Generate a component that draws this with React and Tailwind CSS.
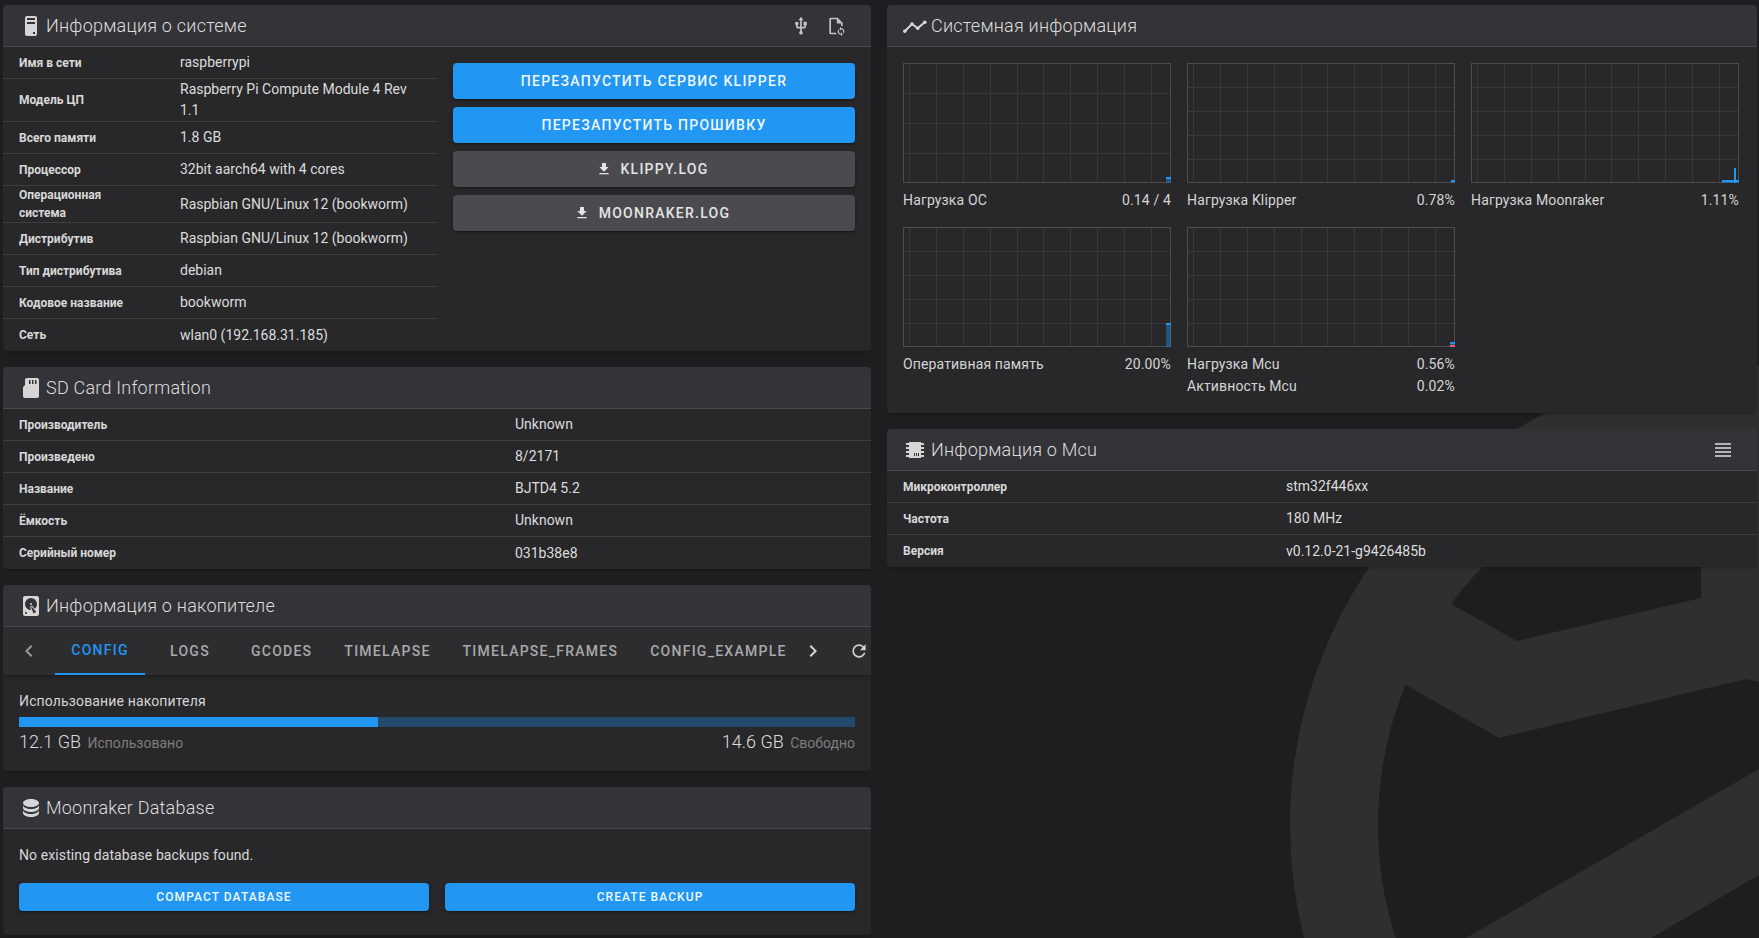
const icons = {
  tower: 'M8,2H16A2,2 0 0,1 18,4V20A2,2 0 0,1 16,22H8A2,2 0 0,1 6,20V4A2,2 0 0,1 8,2M8,4V6H16V4H8M16,8H8V10H16V8M16,18H14V20H16V18Z',
  usb: 'M15,7V11H16V13H13V5H15L12,1L9,5H11V13H8V10.93C8.7,10.56 9.2,9.85 9.2,9C9.2,7.78 8.21,6.8 7,6.8C5.79,6.8 4.8,7.78 4.8,9C4.8,9.85 5.3,10.56 6,10.93V13A2,2 0 0,0 8,15H11V18.05C10.29,18.41 9.8,19.15 9.8,20A2.2,2.2 0 0,0 12,22.2A2.2,2.2 0 0,0 14.2,20C14.2,19.15 13.71,18.41 13,18.05V15H16A2,2 0 0,0 18,13V11H19V7H15Z',
  fileRefresh: 'M6 2C4.89 2 4 2.89 4 4V20C4 21.11 4.89 22 6 22H12.81C12.46 21.39 12.22 20.72 12.09 20H6V4H13V9H18V12.08C18.33 12.03 18.67 12 19 12C19.34 12 19.67 12.03 20 12.08V8L14 2M18 14.5V13L15.75 15.25L18 17.5V16C19.38 16 20.5 17.12 20.5 18.5C20.5 18.9 20.41 19.28 20.24 19.62L21.33 20.71C21.75 20.08 22 19.32 22 18.5C22 16.29 20.21 14.5 18 14.5M18 21C16.62 21 15.5 19.88 15.5 18.5C15.5 18.1 15.59 17.72 15.76 17.38L14.67 16.29C14.25 16.92 14 17.68 14 18.5C14 20.71 15.79 22.5 18 22.5V24L20.25 21.75L18 19.5V21Z',
  sd: 'M8 2H18A2 2 0 0 1 20 4V20A2 2 0 0 1 18 22H6A2 2 0 0 1 4 20V11L6 9V4A2 2 0 0 1 8 2Z M10 4V8H11.5V4Z M13 4V8H14.5V4Z M16 4V8H17.5V4Z',
  disk: 'M6,2H18A2,2 0 0,1 20,4V20A2,2 0 0,1 18,22H6A2,2 0 0,1 4,20V4A2,2 0 0,1 6,2M12,4A6,6 0 0,0 6,10C6,13.31 8.69,16 12.1,16L11.22,13.77C10.95,13.29 11.11,12.68 11.59,12.4L12.45,11.9C12.93,11.63 13.54,11.79 13.82,12.27L15.74,14.69C17.12,13.59 18,11.9 18,10A6,6 0 0,0 12,4M12,9A1,1 0 0,1 13,10A1,1 0 0,1 12,11A1,1 0 0,1 11,10A1,1 0 0,1 12,9M7,18A1,1 0 0,0 6,19A1,1 0 0,0 7,20A1,1 0 0,0 8,19A1,1 0 0,0 7,18M12.09,13.27L14.58,19.58L17.17,18.08L12.95,12.77L12.09,13.27Z',
  database: 'M12,3C7.58,3 4,4.79 4,7C4,9.21 7.58,11 12,11C16.42,11 20,9.21 20,7C20,4.79 16.42,3 12,3M4,9V12C4,14.21 7.58,16 12,16C16.42,16 20,14.21 20,12V9C20,11.21 16.42,13 12,13C7.58,13 4,11.21 4,9M4,14V17C4,19.21 7.58,21 12,21C16.42,21 20,19.21 20,17V14C20,16.21 16.42,18 12,18C7.58,18 4,16.21 4,14Z',
  chip: 'M6,4H18V5H21V7H18V9H21V11H18V13H21V15H18V17H21V19H18V20H6V19H3V17H6V15H3V13H6V11H3V9H6V7H3V5H6V4M11,15V18H12V15H11M13,15V18H14V15H13M15,15V18H16V15H15Z',
  headline: 'M4,5H20V7H4V5M4,9H20V11H4V9M4,13H20V15H4V13M4,17H20V19H4V17Z',
  download: 'M5,20H19V18H5M19,9H15V3H9V9H5L12,16L19,9Z',
  left: 'M15.41,16.58L10.83,12L15.41,7.41L14,6L8,12L14,18L15.41,16.58Z',
  right: 'M8.59,16.58L13.17,12L8.59,7.41L10,6L16,12L10,18L8.59,16.58Z',
  refresh: 'M17.65,6.35C16.2,4.9 14.21,4 12,4A8,8 0 0,0 4,12A8,8 0 0,0 12,20C15.73,20 18.84,17.45 19.73,14H17.65C16.83,16.33 14.61,18 12,18A6,6 0 0,1 6,12A6,6 0 0,1 12,6C13.66,6 15.14,6.69 16.22,7.78L13,11H20V4L17.65,6.35Z',
}

function Icon({ path, className = 'w-6 h-6' }) {
  return (
    <svg viewBox="0 0 24 24" fill="currentColor" fillRule="evenodd" className={'shrink-0 ' + className}>
      <path d={path} />
    </svg>
  )
}

function ChartIcon() {
  return (
    <svg viewBox="0 0 24 24" className="w-6 h-6 shrink-0 text-[#d6d6d6]" fill="currentColor">
      <path d="M1.3 17.7L9 10L14.7 14.3L22.3 7.7" fill="none" stroke="currentColor" strokeWidth="2" />
      <circle cx="1.8" cy="17.2" r="1.8" />
      <circle cx="9" cy="10" r="1.8" />
      <circle cx="14.7" cy="14.3" r="1.8" />
      <circle cx="21.8" cy="8.2" r="1.8" />
    </svg>
  )
}

function Card({ children }) {
  return (
    <div className="relative rounded bg-[#28282a] shadow-[0_3px_3px_-2px_rgba(0,0,0,0.3)] overflow-hidden">
      {children}
    </div>
  )
}

function Header({ icon, title, children, gap = 'gap-[3px]' }) {
  return (
    <div className="flex items-center justify-between h-[42px] pl-4 pr-4 bg-[#333338] border-b border-[#4a4a4d]">
      <div className={'flex items-center text-[#d6d6d6] ' + gap}>
        {icon}
        <span className="text-[18px] font-light tracking-[0.225px] text-[#dedede] leading-none">{title}</span>
      </div>
      {children}
    </div>
  )
}

function Row({ label, value, labelWidth, last }) {
  return (
    <div className={'flex items-center ' + (last ? 'min-h-[32px]' : 'min-h-[32px] border-b border-[#3e3e41]')}>
      <div className={'pl-4 text-[12px] leading-[18px] font-bold text-[#d8d8d8] shrink-0 ' + labelWidth}>{label}</div>
      <div className="pr-4 text-[14px] leading-[21px] text-[#dcdcdc]">{value}</div>
    </div>
  )
}

function BigButton({ children, gray, icon }) {
  return (
    <div className={'flex items-center justify-center h-9 rounded text-[14px] font-medium uppercase tracking-[1.25px] shadow-[0_3px_1px_-2px_rgba(0,0,0,0.2),0_2px_2px_rgba(0,0,0,0.14),0_1px_5px_rgba(0,0,0,0.12)] ' + (gray ? 'bg-[#4b4b4f] text-[#e4e4e4] pr-1' : 'bg-[#2196f3] text-[#eef7fe]')}>
      {icon && <Icon path={icons.download} className="w-4 h-4 mr-[9px]" />}
      {children}
    </div>
  )
}

function SmallButton({ children }) {
  return (
    <div className="flex-1 flex items-center justify-center h-7 rounded bg-[#2196f3] text-[#eef7fe] text-[12px] font-medium uppercase tracking-[1.07px] shadow-[0_3px_1px_-2px_rgba(0,0,0,0.2),0_2px_2px_rgba(0,0,0,0.14),0_1px_5px_rgba(0,0,0,0.12)]">
      {children}
    </div>
  )
}

const vLines = [6.5, 33, 60, 87, 114, 140, 167, 194, 221, 248]

function Chart({ hLines = [24, 48, 72, 96], bars = [] }) {
  return (
    <svg width="268" height="120" viewBox="0 0 268 120" className="block" shapeRendering="crispEdges">
      {vLines.map(x => <line key={x} x1={x} x2={x} y1="0" y2="120" stroke="#39393b" />)}
      {hLines.map(y => <line key={y} x1="0" x2="268" y1={y + 0.5} y2={y + 0.5} stroke="#39393b" />)}
      <rect x="0.5" y="0.5" width="267" height="119" fill="none" stroke="#4d4d4f" />
      {bars.map((b, i) => (
        <g key={i}>
          <rect x={b.x} y={b.y} width={b.w} height={120 - b.y} fill="#2196f3" fillOpacity={b.solid ? 1 : 0.4} />
          <rect x={b.x} y={b.y} width={b.w} height="1.5" fill="#2196f3" />
        </g>
      ))}
    </svg>
  )
}

function Stat({ label, value }) {
  return (
    <div className="flex justify-between text-[14px] leading-[22px] tracking-[0.14px] text-[#d4d4d4]">
      <span>{label}</span>
      <span>{value}</span>
    </div>
  )
}

const systemRows = [
  ['Имя в сети', 'raspberrypi'],
  ['Модель ЦП', 'Raspberry Pi Compute Module 4 Rev 1.1'],
  ['Всего памяти', '1.8 GB'],
  ['Процессор', '32bit aarch64 with 4 cores'],
  ['Операционная система', 'Raspbian GNU/Linux 12 (bookworm)'],
  ['Дистрибутив', 'Raspbian GNU/Linux 12 (bookworm)'],
  ['Тип дистрибутива', 'debian'],
  ['Кодовое название', 'bookworm'],
  ['Сеть', 'wlan0 (192.168.31.185)'],
]

const sdRows = [
  ['Производитель', 'Unknown'],
  ['Произведено', '8/2171'],
  ['Название', 'BJTD4 5.2'],
  ['Ёмкость', 'Unknown'],
  ['Серийный номер', '031b38e8'],
]

const mcuRows = [
  ['Микроконтроллер', 'stm32f446xx'],
  ['Частота', '180 MHz'],
  ['Версия', 'v0.12.0-21-g9426485b'],
]

const tabs = ['config', 'logs', 'gcodes', 'timelapse', 'timelapse_frames', 'config_example']

export default function App() {
  return (
    <div className="relative w-full h-[938px] overflow-hidden bg-[#1d1e20] font-['Roboto',sans-serif]">
      <svg className="absolute inset-0" width="1759" height="938" viewBox="0 0 1759 938">
        <circle cx="1749" cy="825" r="415" fill="none" stroke="#2f2f2f" strokeWidth="88" />
        <polygon fill="#2f2f2f" points="1430,585 1453,605 1517,641 1701,598 1701,420 1759,420 1759,682 1746,679 1499,738 1406,685 1395,670" />
        <polygon fill="#2f2f2f" points="1759,769 1466,938 1651,938 1759,875" />
      </svg>

      <div className="relative flex gap-4 pt-[5px] pl-[3px] pr-[2px]">
        <div className="w-[868px] flex flex-col gap-4">
          <Card>
            <Header icon={<Icon path={icons.tower} />} title="Информация о системе">
              <div className="flex items-center gap-[15px] pr-[9px] text-[#c4c4c4]">
                <Icon path={icons.usb} className="w-5 h-5" />
                <Icon path={icons.fileRefresh} className="w-5 h-5" />
              </div>
            </Header>
            <div className="flex">
              <div className="w-[434px] shrink-0">
                {systemRows.map((r, i) => (
                  <Row key={r[0]} label={r[0]} value={r[1]} labelWidth="w-[177px] pr-12" last={i === systemRows.length - 1} />
                ))}
              </div>
              <div className="flex-1 flex flex-col gap-2 p-4">
                <BigButton>Перезапустить сервис Klipper</BigButton>
                <BigButton>Перезапустить прошивку</BigButton>
                <BigButton gray icon>klippy.log</BigButton>
                <BigButton gray icon>moonraker.log</BigButton>
              </div>
            </div>
          </Card>

          <Card>
            <Header icon={<Icon path={icons.sd} />} title="SD Card Information" />
            {sdRows.map((r, i) => (
              <Row key={r[0]} label={r[0]} value={r[1]} labelWidth="w-[512px] pr-4" last={i === sdRows.length - 1} />
            ))}
          </Card>

          <Card>
            <Header icon={<Icon path={icons.disk} />} title="Информация о накопителе" />
            <div className="flex items-center h-12 bg-[#2d2d30] text-[#a9a9a9] shadow-[0_2px_3px_rgba(0,0,0,0.25)]">
              <div className="w-[52px] flex justify-center shrink-0">
                <Icon path={icons.left} className="w-6 h-6 text-[#9a9a9a]" />
              </div>
              <div className="flex h-full w-[732px] overflow-hidden shrink-0">
                {tabs.map((t, i) => (
                  <div
                    key={t}
                    className={'flex items-center justify-center min-w-[90px] px-4 shrink-0 text-[14px] font-medium uppercase tracking-[1.25px] ' + (i === 0 ? 'text-[#2196f3] border-b-2 border-[#2196f3]' : '')}
                  >
                    {t}
                  </div>
                ))}
              </div>
              <div className="w-[52px] flex justify-center shrink-0">
                <Icon path={icons.right} className="w-6 h-6 text-[#d6d6d6]" />
              </div>
              <Icon path={icons.refresh} className="w-5 h-5 ml-[10px] text-[#d0d0d0]" />
            </div>
            <div className="p-4">
              <div className="text-[14px] leading-[21px] tracking-[0.14px] text-[#d4d4d4]">Использование накопителя</div>
              <div className="mt-[5px] h-2.5 bg-[#25496b]">
                <div className="h-full w-[359px] bg-[#2196f3]" />
              </div>
              <div className="flex justify-between items-center h-7 text-[18px] font-light text-[#dcdcdc]">
                <span><span className="mr-[2px]">12.1 GB</span> <span className="text-[14px] font-normal text-[#7d7d7d]">Использовано</span></span>
                <span><span className="mr-[2px]">14.6 GB</span> <span className="text-[14px] font-normal text-[#7d7d7d]">Свободно</span></span>
              </div>
            </div>
          </Card>

          <Card>
            <Header icon={<Icon path={icons.database} />} title="Moonraker Database" />
            <div className="pt-4 px-4 pb-6">
              <div className="text-[14px] leading-[21px] tracking-[0.1px] text-[#d8d8d8]">No existing database backups found.</div>
              <div className="flex gap-4 mt-[17px]">
                <SmallButton>Compact database</SmallButton>
                <SmallButton>Create backup</SmallButton>
              </div>
            </div>
          </Card>
        </div>

        <div className="flex-1 flex flex-col gap-4">
          <Card>
            <Header icon={<ChartIcon />} gap="gap-1" title="Системная информация" />
            <div className="grid grid-cols-[268px_268px_268px] gap-4 p-4">
              <div>
                <Chart hLines={[30, 60, 90]} bars={[{ x: 263, y: 114, w: 5 }]} />
                <div className="mt-[6px]"><Stat label="Нагрузка ОС" value="0.14 / 4" /></div>
              </div>
              <div>
                <Chart bars={[{ x: 264, y: 117, w: 4 }]} />
                <div className="mt-[6px]"><Stat label="Нагрузка Klipper" value="0.78%" /></div>
              </div>
              <div>
                <Chart bars={[{ x: 251, y: 117, w: 13 }, { x: 263, y: 105, w: 2, solid: true }, { x: 265, y: 117, w: 3 }]} />
                <div className="mt-[6px]"><Stat label="Нагрузка Moonraker" value="1.11%" /></div>
              </div>
              <div>
                <Chart bars={[{ x: 263, y: 96, w: 5 }]} />
                <div className="mt-[6px]"><Stat label="Оперативная память" value="20.00%" /></div>
              </div>
              <div>
                <div className="relative">
                  <Chart bars={[{ x: 263, y: 115, w: 5 }]} />
                  <div className="absolute right-0 bottom-0 w-[5px] h-0.5 bg-[#f0507a]" />
                </div>
                <div className="mt-[6px]">
                  <Stat label="Нагрузка Mcu" value="0.56%" />
                  <Stat label="Активность Mcu" value="0.02%" />
                </div>
              </div>
            </div>
          </Card>

          <Card>
            <Header icon={<Icon path={icons.chip} />} gap="gap-1" title="Информация о Mcu">
              <Icon path={icons.headline} className="w-6 h-6 mr-[6px] text-[#b4b4b4]" />
            </Header>
            {mcuRows.map((r, i) => (
              <Row key={r[0]} label={r[0]} value={r[1]} labelWidth="w-[399px] pr-4" last={i === mcuRows.length - 1} />
            ))}
          </Card>
        </div>
      </div>
    </div>
  )
}
